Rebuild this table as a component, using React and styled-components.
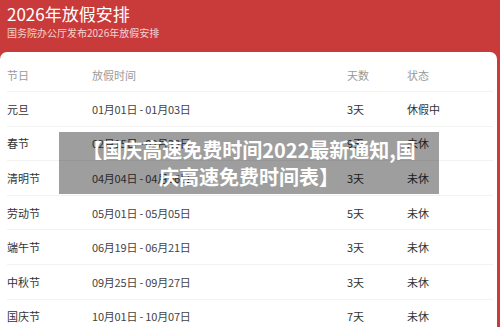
import React from 'react';
import styled, { createGlobalStyle } from 'styled-components';

const GlobalStyle = createGlobalStyle`
  html, body {
    margin: 0;
    padding: 0;
    background: #c93b3b;
    font-family: "Noto Sans CJK SC", "Noto Sans", sans-serif;
  }
`;

const Page = styled.div`
  width: 500px;
  height: 327px;
  overflow: hidden;
  position: relative;
  background: #c93b3b;
`;

const Banner = styled.div`
  height: 52px;
  padding: 3px 7px 0;
  box-sizing: border-box;
  color: #fff;
`;

const Title = styled.h1`
  margin: 0;
  font-size: 17px;
  font-weight: 400;
  line-height: 22px;
`;

const Subtitle = styled.p`
  margin: 1px 0 0;
  font-size: 10px;
  line-height: 14px;
  color: rgba(255, 255, 255, 0.78);
`;

const Card = styled.div`
  background: #fff;
  margin-right: 3px;
  border-radius: 7px 7px 0 0;
  padding: 6px 4px 0 7px;
  height: 275px;
  box-sizing: border-box;
`;

const Row = styled.div`
  display: grid;
  grid-template-columns: 85px 255px 60px 1fr;
  align-items: center;
  height: ${p => (p.head ? '33px' : '33.6px')};
  border-bottom: 1px solid #f2f2f2;
  font-size: 11px;
  color: ${p => (p.head ? '#9a9a9a' : '#333')};
`;

const Cell = styled.span`
  white-space: nowrap;
  color: ${p => (p.date ? '#444' : 'inherit')};
  letter-spacing: ${p => (p.date ? '-0.2px' : '0')};
`;

const Overlay = styled.div`
  position: absolute;
  left: 59px;
  top: 132px;
  width: 380px;
  height: 62px;
  background: rgba(0, 0, 0, 0.38);
  color: #fff;
  font-size: 20px;
  font-weight: 700;
  line-height: 27px;
  text-align: center;
  display: flex;
  align-items: center;
  justify-content: center;
  padding: 0 20px;
  box-sizing: border-box;
`;

const rows = [
  ['元旦', '01月01日 - 01月03日', '3天', '休假中'],
  ['春节', '02月15日 - 02月23日', '9天', '未休'],
  ['清明节', '04月04日 - 04月06日', '3天', '未休'],
  ['劳动节', '05月01日 - 05月05日', '5天', '未休'],
  ['端午节', '06月19日 - 06月21日', '3天', '未休'],
  ['中秋节', '09月25日 - 09月27日', '3天', '未休'],
  ['国庆节', '10月01日 - 10月07日', '7天', '未休'],
];

export default function App() {
  return (
    <Page>
      <GlobalStyle />
      <Banner>
        <Title>2026年放假安排</Title>
        <Subtitle>国务院办公厅发布2026年放假安排</Subtitle>
      </Banner>
      <Card>
        <Row head>
          <Cell>节日</Cell>
          <Cell>放假时间</Cell>
          <Cell>天数</Cell>
          <Cell>状态</Cell>
        </Row>
        {rows.map(r => (
          <Row key={r[0]}>
            <Cell>{r[0]}</Cell>
            <Cell date>{r[1]}</Cell>
            <Cell>{r[2]}</Cell>
            <Cell>{r[3]}</Cell>
          </Row>
        ))}
      </Card>
      <Overlay>【国庆高速免费时间2022最新通知,国庆高速免费时间表】</Overlay>
    </Page>
  );
}
